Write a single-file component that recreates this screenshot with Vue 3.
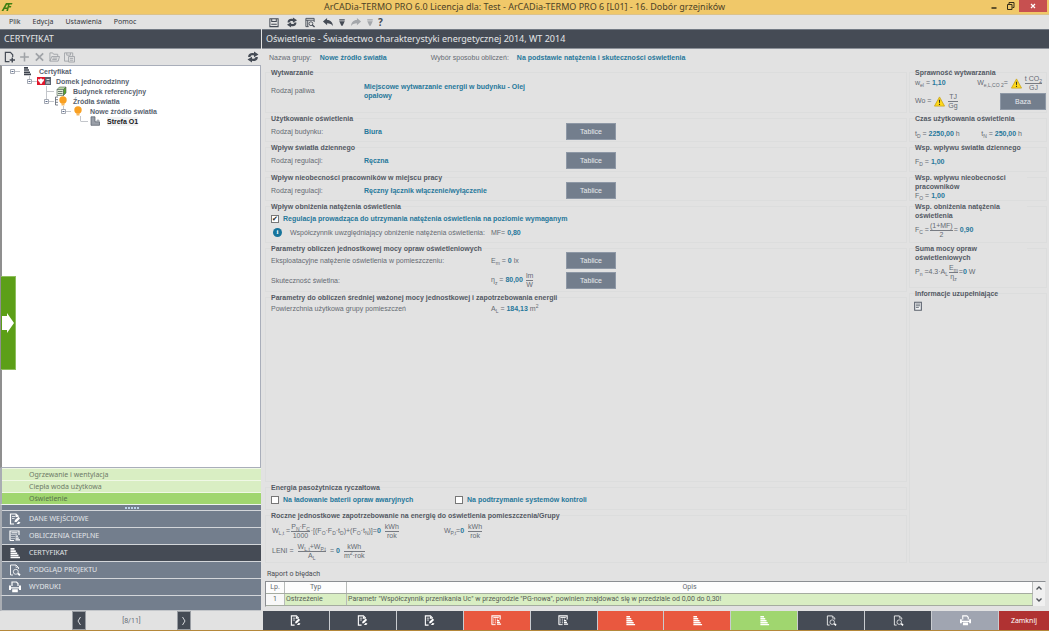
<script setup>
import { ref } from 'vue'

const menu = ['Plik', 'Edycja', 'Ustawienia', 'Pomoc']

const tools = [
  { icon: 'save', label: 'Zapisz' },
  { icon: 'sync', label: 'Odśwież' },
  { icon: 'preview', label: 'Podgląd' },
  { icon: 'undo', label: 'Cofnij' },
  { icon: 'drop', label: 'Lista cofania' },
  { icon: 'redo', label: 'Ponów', off: true },
  { icon: 'drop', label: 'Lista ponawiania', off: true }
]

const treeTools = [
  { icon: 'add-page', label: 'Nowy' },
  { icon: 'plus', label: 'Dodaj', off: true },
  { icon: 'cross', label: 'Usuń', off: true },
  { icon: 'folder', label: 'Otwórz', off: true },
  { icon: 'save-as', label: 'Zapisz do biblioteki', off: true }
]

const tree = [
  { level: 0, icon: 'bars', text: 'Certyfikat', open: true },
  { level: 1, icon: 'house', text: 'Domek jednorodzinny', open: true },
  { level: 2, icon: 'cube', text: 'Budynek referencyjny', next: true },
  { level: 2, icon: 'sources', text: 'Źródła światła', open: true },
  { level: 3, icon: 'bulb', text: 'Nowe źródło światła', open: true },
  { level: 4, icon: 'zone', text: 'Strefa O1', current: true }
]

const steps = [
  { text: 'Ogrzewanie i wentylacja' },
  { text: 'Ciepła woda użytkowa' },
  { text: 'Oświetlenie', current: true }
]

const stages = [
  { icon: 'edit-page', text: 'DANE WEJŚCIOWE' },
  { icon: 'calc', text: 'OBLICZENIA CIEPLNE' },
  { icon: 'stairs', text: 'CERTYFIKAT', current: true },
  { icon: 'lens-page', text: 'PODGLĄD PROJEKTU' },
  { icon: 'printer', text: 'WYDRUKI' }
]

const shortcuts = [
  { icon: 'edit-page', tone: 'dark' },
  { icon: 'edit-page', tone: 'dark' },
  { icon: 'edit-page', tone: 'dark' },
  { icon: 'calc', tone: 'red' },
  { icon: 'calc', tone: 'dark' },
  { icon: 'stairs', tone: 'red' },
  { icon: 'stairs', tone: 'red' },
  { icon: 'stairs', tone: 'green' },
  { icon: 'lens-page', tone: 'dark' },
  { icon: 'lens-page', tone: 'dark' },
  { icon: 'printer', tone: 'grey' }
]

const dimming = ref(true)
const batteries = ref(false)
const controls = ref(false)
</script>

<template>
  <div class="app">
    <svg class="defs" aria-hidden="true">
      <symbol id="logo" viewBox="0 0 12 10">
        <path d="M0.5 9 5 1h6.5l-.6 1.6H8.6l-.4 1.5h2.2l-.6 1.5H7.8L7 9H5.300l.6-2H3.500L2.400 9zM4.300 5.500h2L7 2.700H5.900z" fill="#3f7f12" fill-rule="evenodd" />
      </symbol>
      <symbol id="save" viewBox="0 0 12 12">
        <path d="M1.500 2h9v8.500h-9zM3.500 2v3h5V2M3 8h6" fill="none" stroke="currentColor" stroke-width="1.100" />
      </symbol>
      <symbol id="sync" viewBox="0 0 12 12">
        <path d="M1.200 6C.8 3 4 1.300 7 2.300V.5l4.500 3L7 6.300V4.600C5 4 3.600 4.500 3.500 6z" fill="currentColor" />
        <path d="M10.800 6C11.200 9 8 10.700 5 9.700v1.800l-4.500-3L5 5.700v1.700c2 .6 3.400 .1 3.500-1.400z" fill="currentColor" />
      </symbol>
      <symbol id="preview" viewBox="0 0 12 12">
        <path d="M4.500 10.500h-3v-9h9v4M1.500 3.500h9M3.500 3.500v7" fill="none" stroke="currentColor" />
        <circle cx="7" cy="7.300" r="2.100" fill="none" stroke="currentColor" /><path d="m8.500 8.800 2.500 2.200" stroke="currentColor" stroke-width="1.500" />
      </symbol>
      <symbol id="undo" viewBox="0 0 12 12">
        <path d="M.5 5 5 1v2.400c4 0 6 2.600 6.500 6.600C10 7.500 8 6.700 5 6.700V9z" fill="currentColor" />
      </symbol>
      <symbol id="redo" viewBox="0 0 12 12">
        <path d="M11.500 5 7 1v2.400C3 3.400 1 6 .5 10 2 7.500 4 6.700 7 6.700V9z" fill="currentColor" />
      </symbol>
      <symbol id="drop" viewBox="0 0 8 12">
        <path d="M1 2.500h6v1.200H1zM1 4.700h6L4.700 9.500H3.300z" fill="currentColor" />
      </symbol>
      <symbol id="add-page" viewBox="0 0 12 12">
        <path d="M6 11H1.500V1H7l2.500 2.500V6" fill="none" stroke="currentColor" stroke-width="1.300" />
        <path d="M9 6.500V12M6.200 9.300H12" stroke="currentColor" stroke-width="1.600" />
      </symbol>
      <symbol id="plus" viewBox="0 0 12 12">
        <path d="M6 1.200v9.600M1.200 6h9.600" stroke="currentColor" stroke-width="1.700" />
      </symbol>
      <symbol id="cross" viewBox="0 0 12 12">
        <path d="m2 2 8 8m0-8-8 8" stroke="currentColor" stroke-width="1.900" />
      </symbol>
      <symbol id="folder" viewBox="0 0 12 12">
        <path d="M1 10.500V1.500h3l1 1.500h4.500v2.500M1 10.500l2-5h8.500l-1.500 5zM4 7.200h5M3.500 8.800h5" fill="none" stroke="currentColor" />
      </symbol>
      <symbol id="save-as" viewBox="0 0 12 12">
        <path d="M5 10.500H.5v-9h9V5M3 1.500V4h4V1.500M5 5.500h6.500v6H5zM6.500 7.500H10M6.500 9.500H10" fill="none" stroke="currentColor" />
      </symbol>
      <symbol id="bars" viewBox="0 0 14 10">
        <path d="M4 1h4v1.700H4zM4 3.200h5v1.600H4zM4 5.400h6V7H4zM4 7.600h7v1.600H4z" fill="#3c424c" />
      </symbol>
      <symbol id="house" viewBox="0 0 14 10">
        <path d="M0 1h8v8H0z" fill="#e0162b" /><path d="M1 2.800 2 3.500 3.200 3 4 2l.8 1L6 3.500l1-.7L6.800 5 5.500 6 5 7.500 4 8l-1-.5L2.500 6 1.200 5z" fill="#fff" />
        <path d="M8 1h6v8H8z" fill="#59616d" /><path d="M9.500 3h3v1h-3zM9.500 5.500h3V8h-3z" fill="#dfe4e8" /><path d="M10.500 6.300h1V8h-1z" fill="#59616d" />
      </symbol>
      <symbol id="cube" viewBox="0 0 14 10">
        <path d="M3 3.500 5.500 1H12L9.500 3.500z" fill="#b9d6a2" stroke="#516356" stroke-width=".6" />
        <path d="M3 3.500h6.500v6H3z" fill="#e2ecda" stroke="#516356" stroke-width=".6" />
        <path d="M9.500 3.500 12 1v6L9.500 9.500z" fill="#55a52d" stroke="#516356" stroke-width=".6" />
        <path d="M4 5.500h4.500M4 7.500h4.500" stroke="#6b7a70" />
      </symbol>
      <symbol id="bulb" viewBox="0 0 14 10">
        <circle cx="7" cy="4" r="3.700" fill="#f9a022" /><path d="M5.500 7h3v2.500h-3z" fill="#f7b65a" />
      </symbol>
      <symbol id="sources" viewBox="0 0 14 10">
        <path d="M4 1H1.500v8H4M1.500 3.700H4M1.500 6.300H4" fill="none" stroke="#59616d" stroke-width=".8" />
        <circle cx="9" cy="4" r="3.700" fill="#f9a022" /><path d="M7.500 7h3v2.500h-3z" fill="#f7b65a" />
      </symbol>
      <symbol id="zone" viewBox="0 0 14 10">
        <path d="M3 .8h4v5h4.500V9.300H3z" fill="#9a9fa8" stroke="#555c68" stroke-width=".7" /><path d="M8.500 4.500h3M10 3v2.500" stroke="#888e98" stroke-width=".6" />
      </symbol>
      <symbol id="edit-page" viewBox="0 0 12 12">
        <path d="M5 11H1.500V1H7l2.500 2.500" fill="none" stroke="currentColor" stroke-width="1.200" />
        <path d="M3 3.500h3M3 5.500h2.500" stroke="currentColor" stroke-width=".8" />
        <path d="M6.500 1v3h3zM5.500 9 6 7l3.500-3.200L11 5.500 7.500 9zM7.500 11l2-2.500 2 1-1.500 1.500z" fill="currentColor" />
      </symbol>
      <symbol id="calc" viewBox="0 0 12 12">
        <path d="M1 10.500V1h9v4" fill="none" stroke="currentColor" stroke-width="1.200" />
        <path d="M2.500 2.800h6M2.500 4.500h1M4.500 4.500h1M6.500 4.500h1M2.500 6.500h1M4.500 6.500h1M2.500 8.500h1M4.500 8.500h1M1 10.500h4" stroke="currentColor" />
        <path d="M6.500 5.500H9v1.300H6.500zM6.500 7.400h3.300v1.300H6.500zM6.500 9.300H11v1.300H6.500z" fill="currentColor" />
      </symbol>
      <symbol id="stairs" viewBox="0 0 12 12">
        <path d="M1.500 1h4v1.700h-4zM1.500 3.200h5.300v1.700H1.500zM1.500 5.400h6.700v1.700H1.500zM1.500 7.600h8v1.700h-8zM1.500 9.800h9.500v1.400H1.500z" fill="currentColor" />
      </symbol>
      <symbol id="lens-page" viewBox="0 0 12 12">
        <path d="M4 11H1.500V1H7l2.500 2.500V5" fill="none" stroke="currentColor" stroke-width=".9" />
        <path d="M7 1v2.500h2.500" fill="none" stroke="currentColor" stroke-width=".6" />
        <circle cx="6.800" cy="7.800" r="2.500" fill="none" stroke="currentColor" stroke-width=".8" /><path d="m9 9.500 2 1.700" stroke="currentColor" stroke-width="1.800" />
      </symbol>
      <symbol id="printer" viewBox="0 0 12 12">
        <path d="M0 4.500h2v1.700h8V4.500h2V9h-2V7.500H2V9H0zM3.200 8.300h5.600v3H3.200z" fill="currentColor" />
        <path d="M3 5V1h4.500L9 2.500V5" fill="none" stroke="currentColor" stroke-width="1.200" />
      </symbol>
      <symbol id="warn" viewBox="0 0 12 12">
        <path d="M6 1 11.500 11H.5z" fill="#ffd91a" stroke="#c9a51c" stroke-width=".9" stroke-linejoin="round" />
        <path d="M5.300 4h1.400L6.400 8h-.8zM5.400 8.700h1.200v1.200H5.400z" fill="#3a3520" />
      </symbol>
      <symbol id="note" viewBox="0 0 12 12">
        <path d="M2 1.500h8v9.500H2z" fill="#f2f3f4" stroke="#59606b" stroke-width="1.300" /><path d="M3.500 3.700h5M3.500 5.700h5M3.500 7.700H7" stroke="#59606b" />
      </symbol>
    </svg>

    <header class="titlebar">
      <svg class="logo"><use href="#logo" /></svg>
      <h1>ArCADia-TERMO PRO 6.0 Licencja dla: Test - ArCADia-TERMO PRO 6 [L01] - 16. Dobór grzejników</h1>
      <div class="window-buttons">
        <button aria-label="Minimalizuj"><svg viewBox="0 0 12 12"><path d="M3.500 8h5" stroke="#332c18" stroke-width="1.500" /></svg></button>
        <button aria-label="Przywróć"><svg viewBox="0 0 12 12"><path d="M3.500 4.500h4.500v5H3.500zM5 4V2.500h5v5H8.500" fill="none" stroke="#332c18" /></svg></button>
        <button class="close" aria-label="Zamknij okno"><svg viewBox="0 0 12 12"><path d="m4 4 4 4m0-4-4 4" stroke="#fff" stroke-width="1.200" /></svg></button>
      </div>
    </header>

    <div class="bar">
      <nav class="menu">
        <button v-for="m in menu" :key="m">{{ m }}</button>
      </nav>
      <div class="tools">
        <button v-for="(t, i) in tools" :key="i" :class="{ off: t.off, narrow: t.icon === 'drop' }" :aria-label="t.label">
          <svg><use :href="'#' + t.icon" /></svg>
        </button>
        <button class="help" aria-label="Pomoc programu">?</button>
      </div>
    </div>

    <div class="body">
      <aside class="side">
        <h2>CERTYFIKAT</h2>
        <div class="tree-tools">
          <button v-for="t in treeTools" :key="t.icon" :class="{ off: t.off }" :aria-label="t.label">
            <svg><use :href="'#' + t.icon" /></svg>
          </button>
          <button class="last" aria-label="Odśwież drzewo"><svg><use href="#sync" /></svg></button>
        </div>
        <div class="tree">
          <ul>
            <li v-for="n in tree" :key="n.text" :style="{ paddingLeft: 4 + n.level * 17 + 'px' }">
              <svg class="branch" viewBox="0 0 14 10">
                <path v-if="n.level" d="M6.500 0v5" />
                <path v-if="n.next" d="M6.500 5v5" />
                <path d="M6.500 5.500H14" />
                <template v-if="n.open">
                  <path class="box" d="M4.500 3.500h4v4h-4z" />
                  <path class="minus" d="M5.500 5.500h2" />
                </template>
              </svg>
              <svg class="node"><use :href="'#' + n.icon" /></svg>
              <span :class="{ current: n.current }">{{ n.text }}</span>
            </li>
          </ul>
          <button class="drawer" aria-label="Rozwiń panel">
            <svg viewBox="0 0 12 20"><path d="M0 3h5V0l7 10-7 10v-3H0z" fill="#fff" /></svg>
          </button>
        </div>
        <nav class="steps">
          <a v-for="s in steps" :key="s.text" href="#" :class="{ current: s.current }">{{ s.text }}</a>
        </nav>
        <div class="grip"><i v-for="d in 5" :key="d"></i></div>
        <nav class="stages">
          <a v-for="s in stages" :key="s.text" href="#" :class="{ current: s.current }">
            <svg><use :href="'#' + s.icon" /></svg>{{ s.text }}
          </a>
        </nav>
        <div class="rest"></div>
      </aside>

      <main class="main">
        <h2>Oświetlenie - Świadectwo charakterystyki energetycznej 2014, WT 2014</h2>
        <div class="group-line">
          <span>Nazwa grupy:</span><b>Nowe źródło światła</b>
          <span>Wybór sposobu obliczeń:</span><b>Na podstawie natężenia i skuteczności oświetlenia</b>
        </div>

        <div class="panels">
          <div class="column">
            <section class="making">
              <h3>Wytwarzanie</h3>
              <div class="row"><span>Rodzaj paliwa</span><b>Miejscowe wytwarzanie energii w budynku - Olej opałowy</b></div>
            </section>
            <section class="h29">
              <h3>Użytkowanie oświetlenia</h3>
              <div class="row"><span>Rodzaj budynku:</span><b>Biura</b><button class="btn">Tablice</button></div>
            </section>
            <section class="h30">
              <h3>Wpływ światła dziennego</h3>
              <div class="row"><span>Rodzaj regulacji:</span><b>Ręczna</b><button class="btn">Tablice</button></div>
            </section>
            <section class="h29">
              <h3>Wpływ nieobecności pracowników w miejscu pracy</h3>
              <div class="row"><span>Rodzaj regulacji:</span><b>Ręczny łącznik włączenie/wyłączenie</b><button class="btn">Tablice</button></div>
            </section>
            <section class="dimming">
              <h3>Wpływ obniżenia natężenia oświetlenia</h3>
              <label class="check"><input v-model="dimming" type="checkbox"><b>Regulacja prowadząca do utrzymania natężenia oświetlenia na poziomie wymaganym</b></label>
              <div class="row info">
                <span class="hint"><i>i</i>Współczynnik uwzględniający obniżenie natężenia oświetlenia:</span>
                <span>MF= <b>0,80</b></span>
              </div>
            </section>
            <section class="power">
              <h3>Parametry obliczeń jednostkowej mocy opraw oświetleniowych</h3>
              <div class="row wide">
                <span>Eksploatacyjne natężenie oświetlenia w pomieszczeniu:</span>
                <span>E<sub>m</sub> = <b>0</b> lx</span><button class="btn">Tablice</button>
              </div>
              <div class="row wide">
                <span>Skuteczność świetlna:</span>
                <span class="formula">η<sub>z</sub> = <b>80,00</b> <span class="frac"><span>lm</span><span>W</span></span></span><button class="btn">Tablice</button>
              </div>
            </section>
            <section class="average">
              <h3>Parametry do obliczeń średniej ważonej mocy jednostkowej i zapotrzebowania energii</h3>
              <div class="row wide">
                <span>Powierzchnia użytkowa grupy pomieszczeń</span>
                <span>A<sub>L</sub> = <b>184,13</b> m<sup>2</sup></span>
              </div>
            </section>
            <section class="parasitic">
              <h3>Energia pasożytnicza ryczałtowa</h3>
              <div class="checks">
                <label class="check"><input v-model="batteries" type="checkbox"><b>Na ładowanie baterii opraw awaryjnych</b></label>
                <label class="check"><input v-model="controls" type="checkbox"><b>Na podtrzymanie systemów kontroli</b></label>
              </div>
            </section>
            <section class="annual">
              <h3>Roczne jednostkowe zapotrzebowanie na energię do oświetlenia pomieszczenia/Grupy</h3>
              <div class="sums">
                <div class="formula">
                  W<sub>L,t</sub> =<span class="frac"><span>P<sub>N</sub>·F<sub>C</sub></span><span>1000</span></span>·[(F<sub>O</sub>·F<sub>D</sub>·t<sub>D</sub>)+(F<sub>O</sub>·t<sub>N</sub>)]=<b>0</b><span class="frac unit"><span>kWh</span><span>rok</span></span>
                </div>
                <div class="formula">
                  W<sub>P,t</sub>=<b>0</b><span class="frac unit"><span>kWh</span><span>rok</span></span>
                </div>
                <div class="formula">
                  LENI =<span class="frac unit"><span>W<sub>L,t</sub>+W<sub>P,t</sub></span><span>A<sub>L</sub></span></span>= <b>0</b><span class="frac unit"><span>kWh</span><span>m<sup>2</sup>·rok</span></span>
                </div>
              </div>
            </section>
          </div>

          <div class="column results">
            <section class="making">
              <h3>Sprawność wytwarzania</h3>
              <div class="pair emission">
                <span class="formula">w<sub>el</sub> = <b>1,10</b></span>
                <span class="formula">W<sub>e,L,CO 2</sub>= <svg class="warn"><use href="#warn" /></svg><span class="frac unit"><span>t CO<sub>2</sub></span><span>GJ</span></span></span>
              </div>
              <div class="pair">
                <span class="formula">Wo = <svg class="warn"><use href="#warn" /></svg><span class="frac unit"><span>TJ</span><span>Gg</span></span></span>
                <button class="btn base">Baza</button>
              </div>
            </section>
            <section class="h29">
              <h3>Czas użytkowania oświetlenia</h3>
              <div class="pair times"><span class="formula">t<sub>D</sub> = <b>2250,00</b> h</span><span class="formula">t<sub>N</sub> = <b>250,00</b> h</span></div>
            </section>
            <section class="h30">
              <h3>Wsp. wpływu światła dziennego</h3>
              <div class="formula">F<sub>D</sub> = <b>1,00</b></div>
            </section>
            <section class="h29 absence">
              <h3>Wsp. wpływu nieobecności pracowników</h3>
              <div class="formula">F<sub>O</sub> = <b>1,00</b></div>
            </section>
            <section class="dimming">
              <h3>Wsp. obniżenia natężenia oświetlenia</h3>
              <div class="formula">F<sub>C</sub> =<span class="frac"><span>(1+MF)</span><span>2</span></span>= <b>0,90</b></div>
            </section>
            <section class="total">
              <h3>Suma mocy opraw oświetleniowych</h3>
              <div class="formula">P<sub>n</sub> =4.3·A<sub>L</sub><span class="frac"><span>E<sub>m</sub></span><span>η<sub>z</sub></span></span>=<b>0</b> W</div>
            </section>
            <section class="notes">
              <h3>Informacje uzupełniające</h3>
              <button class="note" aria-label="Notatka"><svg><use href="#note" /></svg></button>
            </section>
          </div>
        </div>

        <div class="report">
          <h4>Raport o błędach</h4>
          <div class="grid">
            <table>
              <thead><tr><th class="no">Lp.</th><th class="kind">Typ</th><th>Opis</th></tr></thead>
              <tbody><tr><td class="no">1</td><td>Ostrzeżenie</td><td>Parametr "Współczynnik przenikania Uc" w przegrodzie "PG-nowa", powinien znajdować się w przedziale od 0,00 do 0,30!</td></tr></tbody>
            </table>
            <div class="scroll">
              <button aria-label="W górę"><svg viewBox="0 0 8 6"><path d="m1.500 4.500 2.500-2.500 2.500 2.500" /></svg></button>
              <button aria-label="W dół"><svg viewBox="0 0 8 6"><path d="m1.500 1.500 2.500 2.500 2.500-2.500" /></svg></button>
            </div>
          </div>
        </div>
      </main>
    </div>

    <footer class="footer">
      <div class="pager">
        <button aria-label="Poprzedni"><svg viewBox="0 0 8 12"><path d="M5.500 2 3 6l2.500 4" /></svg></button>
        <span>[8/11]</span>
        <button aria-label="Następny"><svg viewBox="0 0 8 12"><path d="M2.500 2 5 6l-2.500 4" /></svg></button>
      </div>
      <div class="shortcuts">
        <button v-for="(s, i) in shortcuts" :key="i" :class="s.tone" :aria-label="'Krok ' + (i + 1)">
          <svg><use :href="'#' + s.icon" /></svg>
        </button>
        <button class="exit">Zamknij</button>
      </div>
    </footer>
  </div>
</template>

<style>
body {
  margin: 0;
  background: #e2e2e2;
}
</style>

<style scoped>
.app {
  display: flex;
  flex-direction: column;
  box-sizing: border-box;
  min-height: 100vh;
  border-bottom: 1px solid #b5883a;
  background: #e2e2e2;
  color: #656a72;
  font: 7px/9px "Liberation Sans", Arial, sans-serif;
}
.defs { position: absolute; width: 0; height: 0; }
h1, h2, h3, h4, ul { margin: 0; padding: 0; }
button {
  padding: 0;
  border: 0;
  background: none;
  color: inherit;
  font: inherit;
}
svg { display: block; flex: none; }
b { color: #27789b; }
a { color: inherit; text-decoration: none; }

.titlebar {
  display: flex;
  height: 14px;
  border-bottom: 1px solid #dcc28a;
  background: #f0c869;
}
.logo { width: 12px; height: 10px; margin: 2px 0 0 1px; }
h1 {
  flex: 1;
  padding-left: 50px;
  color: #4c4227;
  font: 9px/14px "Noto Sans", "Open Sans", sans-serif;
  text-align: center;
}
.window-buttons { display: flex; height: 12px; }
.window-buttons button { width: 16px; }
.window-buttons svg { width: 12px; height: 12px; margin: 0 auto; }
.window-buttons .close { width: 28px; margin: 0 2px 0 1px; background: #c75050; }

.bar { display: flex; height: 14px; align-items: center; }
.menu {
  display: flex;
  flex: none;
  box-sizing: border-box;
  width: 262px;
  gap: 12px;
  padding-left: 9px;
  color: #33363b;
  font: 7px/14px "Noto Sans", "Open Sans", sans-serif;
}
.tools { display: flex; align-items: center; padding-left: 6px; gap: 6px; color: #454b55; }
.tools svg { width: 12px; height: 11px; }
.tools .narrow { margin: 0 -2px; }
.tools .narrow svg { width: 8px; }
.tools .off { color: #a4a7ab; }
.help { font: bold 10px/14px "Noto Sans", sans-serif; }

.body { display: flex; flex: 1; }
h2 {
  height: 18px;
  padding-left: 4px;
  border-top: 1px solid #737a84;
  border-bottom: 1px solid #8c9199;
  background: #454b55;
  color: #e4e6e8;
  font: 9px/17px "Noto Sans", "Open Sans", sans-serif;
}
.side {
  display: flex;
  flex: none;
  flex-direction: column;
  width: 261px;
}
.tree-tools {
  display: flex;
  height: 16px;
  align-items: center;
  gap: 4px;
  padding: 0 2px 0 4px;
  color: #454b55;
}
.tree-tools svg { width: 11px; height: 12px; }
.tree-tools .off { color: #a0a3a7; }
.tree-tools .last { margin-left: auto; }
.tree-tools .last svg { width: 12px; }
.tree {
  position: relative;
  flex: 1;
  border: 1px solid #a9aeba;
  border-left: 2px solid #8f8f8f;
  background: #fff;
}
.tree ul { list-style: none; }
.tree li {
  display: flex;
  height: 10px;
  align-items: center;
  color: #59636f;
  font-weight: bold;
}
.branch { width: 14px; height: 10px; }
.branch path { fill: none; stroke: #c3c6cb; }
.branch .box { fill: #fff; stroke: #a4a9b3; }
.branch .minus { stroke: #5a6a8a; }
.node { width: 14px; height: 10px; margin-right: 5px; }
.tree .current { color: #15181c; background: #f3f3f3; }
.drawer {
  position: absolute;
  top: 210px;
  left: -1px;
  width: 15px;
  height: 94px;
  border: 1px solid #8fbf5e;
  border-left: 0;
  background: #5c9f17;
}
.drawer svg { width: 12px; height: 20px; margin-left: 1px; }
.steps, .grip, .stages, .rest { border-left: 2px solid #a9adb3; }
.steps, .stages { font: 7px/12px "Noto Sans", "Open Sans", sans-serif; }
.steps a {
  display: block;
  height: 11px;
  padding-left: 27px;
  border-top: 1px solid #f0f8e6;
  background: #d9eec3;
  color: #6e7a68;
}
.steps .current { background: #a0d66f; color: #57744a; }
.grip {
  display: flex;
  height: 5px;
  align-items: center;
  justify-content: center;
  gap: 1px;
  border-top: 1px solid #eef5ee;
  background: #737e8d;
}
.grip i { width: 2px; height: 2px; background: #bcd2ea; }
.stages a {
  display: flex;
  height: 16px;
  align-items: center;
  padding-left: 7px;
  border-top: 1px solid #d3d6da;
  background: #737e8d;
  color: #e3e6e9;
}
.stages .current { background: #454b55; }
.stages svg { width: 12px; height: 12px; margin-right: 8px; color: #fff; }
.rest { height: 14px; border-top: 1px solid #d3d6da; border-bottom: 1px solid #c3c6ca; background: #737e8d; }

.main {
  display: flex;
  flex: 1;
  flex-direction: column;
  min-width: 0;
  margin-left: 1px;
}
.group-line { display: flex; padding: 4px 7px 5px; }
.group-line b { margin: 0 44px 0 8px; }
.panels { display: flex; flex: 1; padding: 0 2px 0 3px; gap: 2px; }
.column { display: flex; flex: 1; flex-direction: column; min-width: 0; padding-top: 5px; gap: 5px; }
.results { flex: none; width: 138px; }
section {
  box-sizing: border-box;
  padding: 0 5px;
  border: 1px solid #dcdddd;
}
.results section { padding-right: 0; }
h3 {
  width: fit-content;
  margin-top: -5px;
  background: #e2e2e2;
  color: #535963;
  font: bold 7px/9px "Liberation Sans", Arial, sans-serif;
}
.results h3 { max-width: 112px; }
.making { height: 41px; }
.h29 { height: 24px; }
.h30 { height: 25px; }
.dimming { height: 37px; }
.power { height: 44px; }
.total { height: 40px; }
.average, .notes { flex: 1; }
.parasitic { height: 23px; }
.annual { height: 48px; }
.power h3, .results .making h3 { margin-bottom: -3px; }
.row {
  display: grid;
  grid-template-columns: 93px 202px auto;
  align-items: center;
  justify-content: start;
  min-height: 17px;
}
.making .row { min-height: 27px; grid-template-columns: 93px 182px; }
.row.wide { grid-template-columns: 220px 75px auto; min-height: 20px; }
.row.info { grid-template-columns: 220px auto; min-height: 13px; }
.average .row.wide { min-height: 13px; }
.btn {
  width: 50px;
  height: 17px;
  border: 1px solid #8e98a6;
  background: #737e8d;
  color: #e8eaed;
}
.check { display: flex; align-items: center; gap: 4px; min-height: 15px; }
.check input {
  display: grid;
  place-items: center;
  box-sizing: border-box;
  width: 8px;
  height: 8px;
  margin: 0;
  appearance: none;
  border: 1px solid #777;
  background: #fff;
}
.check input:checked::before {
  content: "✔";
  color: #222;
  font: 7px/7px "DejaVu Sans", sans-serif;
}
.checks { display: grid; grid-template-columns: 184px auto; justify-content: start; }
.hint { display: flex; align-items: center; }
.hint i {
  width: 9px;
  height: 9px;
  margin: 0 8px 0 2px;
  border-radius: 50%;
  background: #17749b;
  color: #fff;
  font: bold 7px/9px "Liberation Serif", serif;
  text-align: center;
}
sub, sup { font-size: 5px; line-height: 0; }
.formula { white-space: nowrap; }
.frac {
  display: inline-flex;
  flex-direction: column;
  align-items: center;
  margin: 0 1px;
  line-height: 8px;
  vertical-align: middle;
}
.frac > span + span { align-self: stretch; border-top: 1px solid #777b82; text-align: center; }
.frac.unit { margin: 0 4px; }
.sums {
  display: grid;
  grid-template-columns: 172px auto;
  justify-content: start;
  row-gap: 2px;
  padding: 2px 1px 0;
}
.sums .formula, .results .formula { line-height: 18px; }
.pair { display: flex; align-items: center; justify-content: space-between; min-height: 17px; }
.times { padding: 2px 24px 0 0; }
.emission { padding-right: 2px; }
.results h3 + .formula { line-height: 20px; }
.results .absence .formula { line-height: 9px; }
.results .frac { line-height: 8px; }
.sums .frac { line-height: 8px; }
.warn { display: inline-block; width: 11px; height: 11px; margin: 0 1px; vertical-align: middle; }
.results .making .unit { margin: 0 2px; }
.base { width: 46px; }
.note svg { width: 10px; height: 10px; margin: 3px 0 0 -2px; }

.report { padding: 7px 3px 4px; }
h4 { padding-left: 2px; color: #4a4d52; font: 7px/9px Roboto, "Noto Sans", sans-serif; }
.grid {
  display: flex;
  margin-top: 2px;
  border: 1px solid #8b8e92;
  border-right-color: #e2e2e2;
  border-bottom-color: #e2e2e2;
  background: #fdfdfd;
}
table {
  flex: 1;
  border-collapse: collapse;
  table-layout: fixed;
  font: 7px/11px Roboto, "Noto Sans", sans-serif;
}
th, td { padding: 0 1px; border-right: 1px solid #b8bbb9; border-bottom: 1px solid #a5aca0; font-weight: normal; }
td { background: #d9eec3; color: #565d55; }
.no { width: 16px; text-align: center; }
td.no { background: #f8f8f8; }
.kind { width: 59px; }
.scroll { display: flex; flex-direction: column; justify-content: space-around; width: 12px; background: #f0f0f0; }
.scroll svg { width: 8px; height: 6px; margin: 0 auto; }
.scroll path { fill: none; stroke: #50545a; stroke-width: 1.400; }

.footer { display: flex; height: 19px; }
.pager {
  display: flex;
  flex: none;
  box-sizing: border-box;
  width: 263px;
  justify-content: space-between;
  align-items: center;
  padding: 0 72px;
  font: 7px/18px Roboto, "Noto Sans", sans-serif;
}
.pager button { width: 14px; height: 19px; border: 1px solid #999da3; background: #454b55; }
.pager svg { width: 8px; height: 12px; margin: 0 auto; }
.pager path { fill: none; stroke: #d5d8dc; }
.shortcuts { display: flex; flex: 1; }
.shortcuts button { flex: 1; border-right: 1px solid #c9ccd0; color: #fff; }
.shortcuts svg { width: 11px; height: 11px; margin: 0 auto; }
.shortcuts .dark { background: #454b55; }
.shortcuts .red { background: #e9583f; }
.shortcuts .green { background: #a0d66f; }
.shortcuts .grey { background: #a0a5b1; }
.shortcuts .exit { flex: none; width: 50px; border: 0; background: #b03232; font: 7px/18px "Noto Sans", "Open Sans", sans-serif; }
</style>
